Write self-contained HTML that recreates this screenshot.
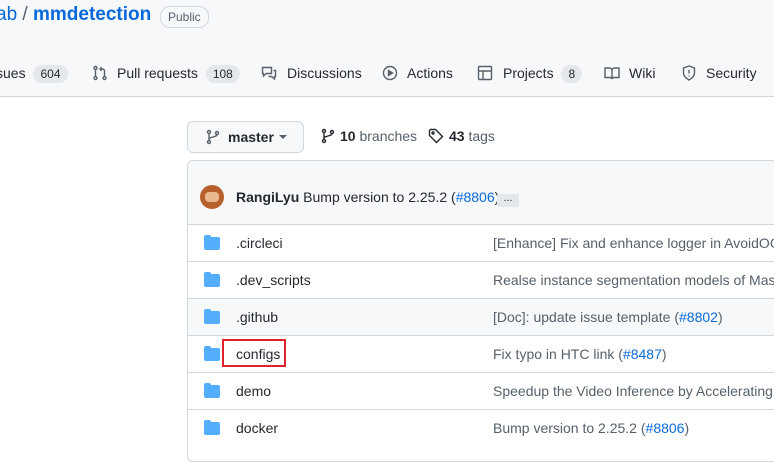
<!DOCTYPE html>
<html><head><style>
body{margin:0;width:774px;height:439px;overflow:hidden;background:#fff;font-family:"Liberation Sans",sans-serif;color:#24292f;position:relative}
.hdr{position:absolute;left:0;top:0;width:774px;height:96px;background:#f6f8fa;border-bottom:1px solid #d0d7de}
.abs{position:absolute;white-space:nowrap}
.t{font-size:14px}
.cnt{display:inline-block;background:#e4e8ec;border-radius:10px;padding:0 7px;font-size:12px;line-height:18px;color:#24292f}
svg{position:absolute}
.box{position:absolute;left:187px;top:160px;width:600px;height:300px;border:1px solid #d0d7de;border-radius:6px}
.row{position:absolute;left:188px;width:600px;height:36px;border-top:1px solid #d0d7de}
.fold{position:absolute;left:16px;top:12px;width:16px;height:13px;background:#54aeff;border-radius:2px}
.fold:before{content:"";position:absolute;left:0;top:-2px;width:7px;height:3px;background:#54aeff;border-radius:2px 2px 0 0}
.nm{position:absolute;left:48px;top:10px;font-size:14px}
.msg{position:absolute;left:305px;top:10px;font-size:14px;color:#57606a;white-space:nowrap}
a{color:#0969da}
</style></head><body>
<div class="hdr"></div>
<div class="abs" style="left:-4px;top:4px;font-size:19px;color:#0969da">ab <span style="color:#57606a">/</span> <b style="font-weight:600">mmdetection</b></div>
<div class="abs" style="left:160px;top:6px;border:1px solid #d0d7de;border-radius:10px;font-size:12px;padding:1px 7px;color:#57606a;line-height:18px">Public</div>
<div class="abs t" style="left:-4px;top:65px">sues <span class="cnt" style="margin-left:4px">604</span></div>
<svg style="left:92px;top:65px" width="16" height="16" viewBox="0 0 16 16" fill="none" stroke="#57606a" stroke-width="1.4"><circle cx="3.5" cy="3" r="1.5"/><circle cx="3.5" cy="13" r="1.5"/><path d="M3.5 4.5v7M12.5 11.5V6a2 2 0 0 0-2-2H8M9.5 2 8 4l1.5 2"/><circle cx="12.5" cy="13" r="1.5"/></svg>
<div class="abs t" style="left:117px;top:65px">Pull requests <span class="cnt" style="margin-left:4px">108</span></div>
<svg style="left:261px;top:65px" width="16" height="16" viewBox="0 0 16 16" fill="none" stroke="#57606a" stroke-width="1.4"><path d="M1.5 2.5h9v6h-5l-3 2.5v-2.5h-1zM12.5 5.5h2v6h-1v2.5l-3-2.5h-3"/></svg>
<div class="abs t" style="left:287px;top:65px">Discussions</div>
<svg style="left:382px;top:65px" width="16" height="16" viewBox="0 0 16 16" fill="none" stroke="#57606a" stroke-width="1.4"><circle cx="8" cy="8" r="6.5"/><path d="M6.5 5.5v5l4-2.5z" fill="#57606a"/></svg>
<div class="abs t" style="left:407px;top:65px">Actions</div>
<svg style="left:477px;top:65px" width="16" height="16" viewBox="0 0 16 16" fill="none" stroke="#57606a" stroke-width="1.4"><rect x="1.5" y="1.5" width="13" height="13" rx="1"/><path d="M1.5 6h13M6 6v8.5"/></svg>
<div class="abs t" style="left:503px;top:65px">Projects <span class="cnt" style="margin-left:4px">8</span></div>
<svg style="left:604px;top:65px" width="16" height="16" viewBox="0 0 16 16" fill="none" stroke="#57606a" stroke-width="1.4"><path d="M1 3h4.5a2.5 2.5 0 0 1 2.5 2.5V14a2 2 0 0 0-2-1.5H1zM15 3h-4.5A2.5 2.5 0 0 0 8 5.5V14a2 2 0 0 1 2-1.5h5z"/></svg>
<div class="abs t" style="left:629px;top:65px">Wiki</div>
<svg style="left:681px;top:65px" width="16" height="16" viewBox="0 0 16 16" fill="none" stroke="#57606a" stroke-width="1.4"><path d="M8 1 2.5 3v5c0 3.5 3 5.5 5.5 7 2.5-1.5 5.5-3.5 5.5-7V3z"/><path d="M8 5v3.5M8 10.5v1"/></svg>
<div class="abs t" style="left:706px;top:65px">Security</div>

<div class="abs" style="left:187px;top:121px;width:115px;height:30px;border:1px solid #d0d7de;border-radius:6px;background:#f6f8fa"></div>
<svg style="left:205px;top:129px" width="16" height="16" viewBox="0 0 16 16" fill="none" stroke="#57606a" stroke-width="1.4"><circle cx="4" cy="3" r="1.5"/><circle cx="4" cy="13" r="1.5"/><circle cx="12" cy="4" r="1.5"/><path d="M4 4.5v7M12 5.5c0 3-8 2-8 5"/></svg>
<div class="abs t" style="left:228px;top:129px;font-weight:bold">master</div>
<div class="abs" style="left:279px;top:135px;border:4px solid transparent;border-top:4px solid #57606a"></div>
<svg style="left:320px;top:128px" width="16" height="16" viewBox="0 0 16 16" fill="none" stroke="#24292f" stroke-width="1.4"><circle cx="4" cy="3" r="1.5"/><circle cx="4" cy="13" r="1.5"/><circle cx="12" cy="4" r="1.5"/><path d="M4 4.5v7M12 5.5c0 3-8 2-8 5"/></svg>
<div class="abs t" style="left:340px;top:128px"><b>10</b> <span style="color:#57606a">branches</span></div>
<svg style="left:428px;top:128px" width="16" height="16" viewBox="0 0 16 16" fill="none" stroke="#24292f" stroke-width="1.4"><path d="M1.5 2.5v5l7 7 6-6-7-7h-5z"/><circle cx="5" cy="5" r="1"/></svg>
<div class="abs t" style="left:449px;top:128px"><b>43</b> <span style="color:#57606a">tags</span></div>

<div class="box"></div>
<div class="abs" style="left:188px;top:161px;width:600px;height:63px;background:#f6f8fa;border-radius:6px 0 0 0"></div>
<div class="abs" style="left:200px;top:185px;width:24px;height:24px;border-radius:50%;background:#b8602c"><div style="position:absolute;left:5px;top:7px;width:14px;height:10px;background:#e9b88c;border-radius:4px"></div></div>
<div class="abs t" style="left:236px;top:189px"><b style="font-weight:600">RangiLyu</b> Bump version to 2.25.2 (<a>#8806</a>)</div>
<div class="abs" style="left:497px;top:194px;width:22px;height:13px;background:#e4e8ec;border-radius:2px;font-size:11px;line-height:8px;text-align:center;color:#24292f">...</div>

<div class="row" style="top:224px"><div class="fold"></div><div class="nm">.circleci</div><div class="msg">[Enhance] Fix and enhance logger in AvoidOOM</div></div>
<div class="row" style="top:261px"><div class="fold"></div><div class="nm">.dev_scripts</div><div class="msg">Realse instance segmentation models of Mask</div></div>
<div class="row" style="top:298px;background:#f6f8fa"><div class="fold"></div><div class="nm">.github</div><div class="msg">[Doc]: update issue template (<a>#8802</a>)</div></div>
<div class="row" style="top:335px"><div class="fold"></div><div class="nm">configs</div><div class="msg">Fix typo in HTC link (<a>#8487</a>)</div></div>
<div class="row" style="top:372px"><div class="fold"></div><div class="nm">demo</div><div class="msg">Speedup the Video Inference by Accelerating</div></div>
<div class="row" style="top:409px"><div class="fold"></div><div class="nm">docker</div><div class="msg">Bump version to 2.25.2 (<a>#8806</a>)</div></div>
<div class="abs" style="left:222px;top:339px;width:60px;height:24px;border:2px solid #e0202a"></div>
</body></html>
